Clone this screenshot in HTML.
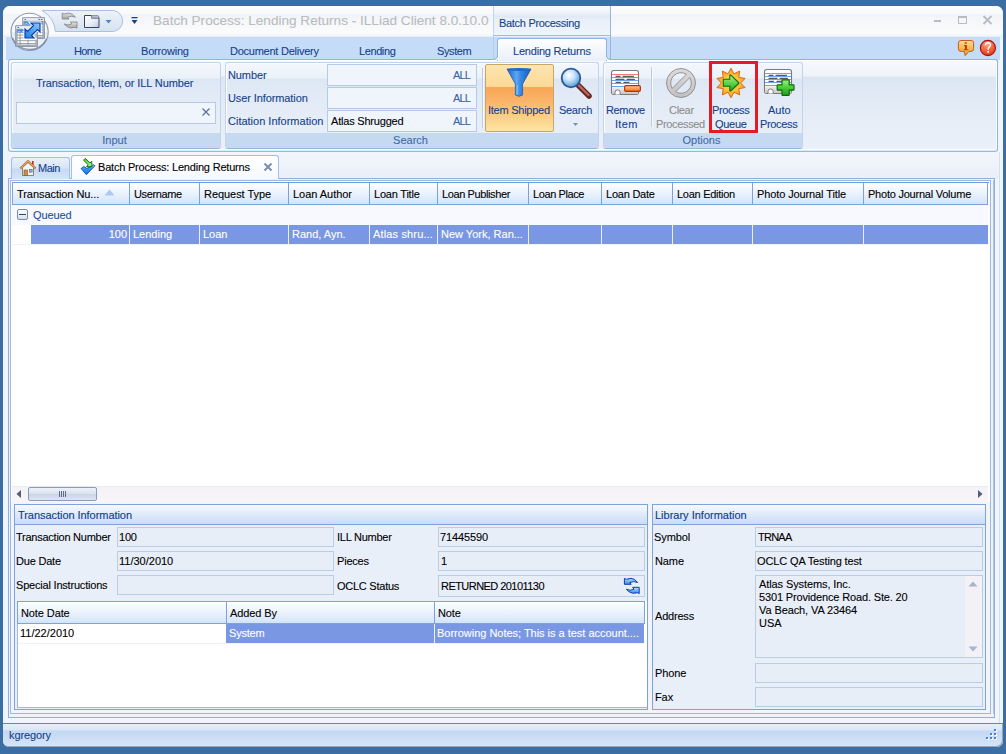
<!DOCTYPE html>
<html><head><meta charset="utf-8">
<style>
*{box-sizing:border-box;margin:0;padding:0}
html,body{width:1006px;height:754px;overflow:hidden;font-family:"Liberation Sans",sans-serif;font-size:11px;color:#000}
body{position:relative;background:#3a6ea5}
.a{position:absolute}
.t{position:absolute;white-space:nowrap;line-height:13px;-webkit-text-stroke:0.1px currentColor}
.bl{color:#15428b}
.grp{position:absolute;border:1px solid #c2d4ec;border-bottom-color:#9db4d6;border-radius:3px;background:linear-gradient(#f4f7fc 0,#ebf1f9 15px,#dde7f4 16px,#e3ebf6 45%,#eaf0f9 100%);box-shadow:inset 1px 1px 0 #fbfdff}
.glbl{position:absolute;left:0;right:0;bottom:0;height:15px;background:#c5d9f0;color:#3e6aaa;text-align:center;line-height:15px;border-radius:0 0 2px 2px;padding-right:3px;-webkit-text-stroke:0.1px currentColor}
.tb{position:absolute;background:#f0f5fc;border:1px solid #b5cae6}
.fld{position:absolute;background:#e8eef8;border:1px solid #b9cde6}
.hdr{position:absolute;background:linear-gradient(#fdfeff,#e6eefa 70%,#d3e0f4);border-bottom:1px solid #7fa5de}
.sep{position:absolute;width:1px;background:#84a9de}
</style></head><body>
<!-- window -->
<div class="a" style="left:3px;top:6px;width:1000px;height:740px;background:#f0f5fb;border-radius:7px 7px 5px 5px"></div>
<!-- title bar -->
<div class="a" style="left:3px;top:6px;width:1000px;height:31px;background:linear-gradient(#fdfdfe 0,#f8f9fb 8px,#eff2f6 9px,#f3f5f9 11px,#fafbfc 27px,#f5f7fa 29px,#e8edf4 31px);border-radius:7px 7px 0 0"></div>
<!-- tab strip -->
<div class="a" style="left:6px;top:37px;width:994px;height:23px;background:#c5dcf8"></div>
<!-- ribbon panel -->
<div class="a" style="left:8px;top:59px;width:990px;height:93px;border:1px solid #8db2e6;border-bottom-color:#a3b5d5;border-radius:3px;background:linear-gradient(#f6f9fd 0,#eff4fa 16px,#dce6f3 17px,#e3ebf6 50%,#ebf1fa 100%);box-shadow:inset 0 -1px 0 #cdf2fb, inset 0 -2px 0 #fbfdff, inset 0 0 0 1px #ffffff"></div>

<!-- title text -->
<div class="t" style="left:153px;top:12px;font-size:13.6px;line-height:17px;color:#b9bcc0">Batch Process: Lending Returns - ILLiad Client 8.0.10.0</div>
<!-- contextual header -->
<div class="a" style="left:493px;top:6px;width:118px;height:30px;border-left:1px solid #c3d4ea;border-right:1px solid #9ab5dc;background:linear-gradient(#f8fafd 0,#eef3fa 7px,#dfe8f4 10px,#e9f0f9 14px,#eff4fb 100%)"></div>
<div class="a" style="left:494px;top:35px;width:116px;height:1px;background:#a5bad6"></div>
<div class="t bl" style="left:499px;top:17px;letter-spacing:-0.3px">Batch Processing</div>
<!-- contextual tab strip region -->
<div class="a" style="left:493px;top:36px;width:118px;height:23px;border-left:1px solid #b5cdeb;border-right:1px solid #9ab5dc"></div>
<!-- active tab -->
<div class="a" style="left:497px;top:38px;width:110px;height:23px;border:1px solid #8db2e3;border-bottom:none;border-radius:3px 3px 0 0;background:linear-gradient(#fdfeff,#f3f7fc 50%,#eaf0f9);box-shadow:inset 1px 1px 0 #ffffff"></div>
<div class="t bl" style="left:513px;top:45px;letter-spacing:-0.2px">Lending Returns</div>
<svg class="a" style="left:606px;top:52px" width="6" height="8" viewBox="0 0 6 8"><path d="M0 0 H0.5 V3 Q0.5 7.5 5 7.5 H6 V8 H0 Z" fill="#e9eff8"/><path d="M0.5 0 V3 Q0.5 7.5 5 7.5 H6" fill="none" stroke="#8db2e3" stroke-width="1"/></svg>
<svg class="a" style="left:492px;top:52px" width="6" height="8" viewBox="0 0 6 8"><path d="M6 0 H5.5 V3 Q5.5 7.5 1 7.5 H0 V8 H6 Z" fill="#e9eff8"/><path d="M5.5 0 V3 Q5.5 7.5 1 7.5 H0" fill="none" stroke="#8db2e3" stroke-width="1"/></svg>

<!-- tabs -->
<div class="t bl" style="left:74px;top:45px;letter-spacing:-0.6px">Home</div>
<div class="t bl" style="left:141px;top:45px;letter-spacing:-0.2px">Borrowing</div>
<div class="t bl" style="left:230px;top:45px;letter-spacing:-0.25px">Document Delivery</div>
<div class="t bl" style="left:359px;top:45px;letter-spacing:-0.4px">Lending</div>
<div class="t bl" style="left:437px;top:45px;letter-spacing:-0.4px">System</div>

<!-- QAT pill -->
<svg class="a" style="left:36px;top:9px" width="90" height="25" viewBox="0 0 90 25">
 <defs><linearGradient id="qg" x1="0" y1="0" x2="0" y2="1"><stop offset="0" stop-color="#eef3fa"/><stop offset="0.5" stop-color="#e2eaf5"/><stop offset="1" stop-color="#d6e2f1"/></linearGradient></defs>
 <path d="M6 1.5 H77.5 A10.6 10.6 0 0 1 77.5 22.5 H19.4 A25 25 0 0 0 6 1.5 Z" fill="url(#qg)" stroke="#a9c0e0" stroke-width="1"/>
</svg>
<!-- refresh icon -->
<svg class="a" style="left:61px;top:12px" width="18" height="18" viewBox="0 0 18 18">
 <defs><linearGradient id="rfg" x1="0" y1="0" x2="0" y2="1"><stop offset="0" stop-color="#e2e2e2"/><stop offset="1" stop-color="#a2a2a2"/></linearGradient></defs>
 <g transform="translate(-1.2,-0.3)">
 <path d="M2.4 1.4 L4.2 2.3 Q9.5 0.2 12.8 2.6 L15.6 5.5 Q11.5 3.6 7.8 5.6 L9.2 7.3 L2.4 7.3 Z" fill="url(#rfg)" stroke="#8a8a8a" stroke-width="0.9" stroke-linejoin="round"/>
 <path d="M17.2 10.3 L17.2 16.6 L15.4 15.7 Q10.2 17.4 6.8 14.6 L4.4 12.3 Q8.4 14.2 12 12.2 L10.6 10.3 Z" fill="url(#rfg)" stroke="#8a8a8a" stroke-width="0.9" stroke-linejoin="round"/>
 </g>
</svg>
<!-- folder icon -->
<svg class="a" style="left:83px;top:14px" width="18" height="15" viewBox="0 0 18 15">
 <defs><linearGradient id="fg" x1="0" y1="0" x2="1" y2="1"><stop offset="0" stop-color="#ffffff"/><stop offset="0.6" stop-color="#e6ebf5"/><stop offset="1" stop-color="#b9c8e2"/></linearGradient></defs>
 <path d="M1.5 1.5 H8.5 V4 H16 V13.5 H1.5 Z" fill="url(#fg)" stroke="#34465f" stroke-width="1"/>
 <path d="M8.5 1.5 H15 L16 3 V4 H8.5 Z" fill="#b8bec8" stroke="#7d8796" stroke-width="0.8"/>
</svg>
<svg class="a" style="left:105px;top:19px" width="7" height="5" viewBox="0 0 7 5"><path d="M0.5 1 H6.5 L3.5 4.5 Z" fill="#5a82c0"/></svg>
<!-- customize qat -->
<svg class="a" style="left:131px;top:17px" width="7" height="8" viewBox="0 0 7 8"><rect x="0.5" y="0" width="6" height="1.3" fill="#15428b"/><path d="M0.5 3 H6.5 L3.5 7 Z" fill="#15428b"/></svg>

<!-- app orb -->
<svg class="a" style="left:9px;top:11px" width="42" height="42" viewBox="0 0 42 42">
 <defs>
  <linearGradient id="og" x1="0" y1="0" x2="0" y2="1"><stop offset="0" stop-color="#ffffff"/><stop offset="0.5" stop-color="#f5f7fa"/><stop offset="0.52" stop-color="#e6ebf1"/><stop offset="1" stop-color="#f3f5f8"/></linearGradient>
  <linearGradient id="ag" x1="0" y1="1" x2="1" y2="0"><stop offset="0" stop-color="#1d7fe0"/><stop offset="1" stop-color="#8cc8fb"/></linearGradient>
 </defs>
 <circle cx="20.6" cy="20.9" r="18.6" fill="url(#og)" stroke="#8d9bb0" stroke-width="1.1"/>
 <path d="M3.5 27 A18.6 18.6 0 0 0 37.5 28" fill="none" stroke="#66768e" stroke-width="1.4" opacity="0.7"/>
 <rect x="13.8" y="6.8" width="21.5" height="20.5" fill="#dfe6f0" stroke="#7b889b" stroke-width="1"/>
 <rect x="14.3" y="7.3" width="20.5" height="2.8" fill="#e8eef7"/>
 <g fill="#5c6470"><rect x="15.5" y="8.1" width="1.6" height="0.9"/><rect x="29.5" y="8.1" width="1.6" height="0.9"/><rect x="31.900000000000002" y="8.1" width="1.6" height="0.9"/></g>
 <rect x="15.0" y="10.3" width="19" height="15.8" fill="#ffffff" stroke="#7f8894" stroke-width="0.9"/>
 <rect x="15.4" y="10.7" width="18.2" height="3" fill="#2f7fd8"/>
 <g fill="#d8ecff"><rect x="16.3" y="11.8" width="2.2" height="0.9"/><rect x="19.8" y="11.8" width="2.2" height="0.9"/></g>
 <g stroke="#8f959c" stroke-width="0.9"><line x1="15.3" y1="16.1" x2="33.8" y2="16.1"/><line x1="15.3" y1="18.9" x2="33.8" y2="18.9"/><line x1="15.3" y1="21.7" x2="33.8" y2="21.7"/><line x1="15.3" y1="24.5" x2="33.8" y2="24.5"/><line x1="18.1" y1="13.7" x2="18.1" y2="25.900000000000002"/><line x1="26.1" y1="18.9" x2="26.1" y2="25.900000000000002"/></g>
 <rect x="6.8" y="14.8" width="21.5" height="20.5" fill="#dfe6f0" stroke="#7b889b" stroke-width="1"/>
 <rect x="7.3" y="15.3" width="20.5" height="2.8" fill="#e8eef7"/>
 <g fill="#5c6470"><rect x="8.5" y="16.1" width="1.6" height="0.9"/><rect x="22.5" y="16.1" width="1.6" height="0.9"/><rect x="24.900000000000002" y="16.1" width="1.6" height="0.9"/></g>
 <rect x="8.0" y="18.3" width="19" height="15.8" fill="#ffffff" stroke="#7f8894" stroke-width="0.9"/>
 <rect x="8.4" y="18.700000000000003" width="18.2" height="3" fill="#2f7fd8"/>
 <g fill="#d8ecff"><rect x="9.3" y="19.8" width="2.2" height="0.9"/><rect x="12.8" y="19.8" width="2.2" height="0.9"/></g>
 <g stroke="#8f959c" stroke-width="0.9"><line x1="8.3" y1="24.1" x2="26.8" y2="24.1"/><line x1="8.3" y1="26.9" x2="26.8" y2="26.9"/><line x1="8.3" y1="29.700000000000003" x2="26.8" y2="29.700000000000003"/><line x1="8.3" y1="32.5" x2="26.8" y2="32.5"/><line x1="11.1" y1="21.700000000000003" x2="11.1" y2="33.900000000000006"/><line x1="19.1" y1="26.9" x2="19.1" y2="33.900000000000006"/></g>
 <path d="M31 12 L31 21 L28.5 18.5 L22.5 24.5 L25 27 L16 27 L16 18 L18.5 20.5 L24.5 14.5 L22 12 Z" fill="none" stroke="#ffffff" stroke-width="3" stroke-linejoin="miter"/>
 <path d="M31 12 L31 21 L28.5 18.5 L22.5 24.5 L25 27 L16 27 L16 18 L18.5 20.5 L24.5 14.5 L22 12 Z" fill="url(#ag)" stroke="#0b3db0" stroke-width="1.2" stroke-linejoin="miter"/>
</svg>

<!-- window buttons -->
<div class="a" style="left:934px;top:20px;width:7px;height:2px;background:#b8bcc2"></div>
<div class="a" style="left:958px;top:16px;width:9px;height:8px;border:1px solid #b8bcc2;border-top-width:2px"></div>
<svg class="a" style="left:982px;top:15px" width="11" height="10" viewBox="0 0 11 10"><path d="M1.5 1 L9.5 9 M9.5 1 L1.5 9" stroke="#b8bcc2" stroke-width="1.8"/></svg>

<!-- info & help icons -->
<svg class="a" style="left:957px;top:39px" width="18" height="18" viewBox="0 0 18 18">
 <defs><linearGradient id="ig" x1="0" y1="0" x2="0" y2="1"><stop offset="0" stop-color="#ffe2a8"/><stop offset="0.3" stop-color="#ffc46a"/><stop offset="1" stop-color="#f89a36"/></linearGradient></defs>
 <path d="M4 1.5 H14 Q16.6 1.5 16.6 4.2 V9.8 Q16.6 12.4 14 12.4 H12 L8.2 16.6 L7.4 12.4 H4 Q1.4 12.4 1.4 9.8 V4.2 Q1.4 1.5 4 1.5 Z" fill="url(#ig)" stroke="#cc5a12" stroke-width="1" stroke-linejoin="round"/>
 <rect x="7.6" y="3.3" width="2.2" height="1.4" fill="#b8400e"/>
 <path d="M7 6 H9.9 V10.2 H11.4 V11.2 H6.8 V10.2 H7.9 V7 H7 Z" fill="#b8400e"/>
</svg>
<svg class="a" style="left:979px;top:39px" width="18" height="18" viewBox="0 0 18 18">
 <defs><radialGradient id="hg" cx="0.45" cy="0.25" r="0.75"><stop offset="0" stop-color="#ffa888"/><stop offset="0.5" stop-color="#f56a48"/><stop offset="1" stop-color="#dc3a1c"/></radialGradient></defs>
 <circle cx="8.9" cy="9" r="7.6" fill="url(#hg)" stroke="#a8100c" stroke-width="1.1"/>
 <path d="M6.4 6.2 Q6.6 3.7 9 3.7 Q11.6 3.8 11.5 6 Q11.4 7.6 9.6 8.6 L9.1 10.8" fill="none" stroke="#fff" stroke-width="1.4"/>
 <rect x="8.3" y="12" width="1.7" height="1.7" fill="#fff"/>
</svg>

<!-- groups -->
<div class="grp" style="left:11px;top:62px;width:210px;height:87px"><div class="glbl">Input</div></div>
<div class="grp" style="left:225px;top:62px;width:374px;height:87px"><div class="glbl">Search</div></div>
<div class="grp" style="left:603px;top:62px;width:200px;height:87px"><div class="glbl">Options</div></div>


<!-- Input group content -->
<div class="t bl" style="left:36px;top:77px;letter-spacing:-0.1px">Transaction, Item, or ILL Number</div>
<div class="tb" style="left:16px;top:102px;width:200px;height:22px"></div>
<svg class="a" style="left:201px;top:107px" width="10" height="10" viewBox="0 0 10 10"><path d="M1.5 1.5 L8.5 8.5 M8.5 1.5 L1.5 8.5" stroke="#5470a4" stroke-width="1.2"/></svg>

<!-- Search group content -->
<div class="t bl" style="left:228px;top:69px;letter-spacing:-0.1px">Number</div>
<div class="t bl" style="left:228px;top:92px;letter-spacing:-0.1px">User Information</div>
<div class="t bl" style="left:228px;top:115px;letter-spacing:0px">Citation Information</div>
<div class="tb" style="left:327px;top:64px;width:150px;height:22px"></div>
<div class="tb" style="left:327px;top:87px;width:150px;height:22px"></div>
<div class="tb" style="left:327px;top:110px;width:150px;height:22px"></div>
<div class="t" style="left:453px;top:69px;color:#3b64a8;letter-spacing:-0.9px">ALL</div>
<div class="t" style="left:453px;top:92px;color:#3b64a8;letter-spacing:-0.9px">ALL</div>
<div class="t" style="left:453px;top:115px;color:#3b64a8;letter-spacing:-0.9px">ALL</div>
<div class="t" style="left:331px;top:115px;letter-spacing:-0.2px">Atlas Shrugged</div>
<div class="a" style="left:482px;top:68px;width:1px;height:60px;background:#b9cde6"></div>
<div class="a" style="left:483px;top:68px;width:1px;height:60px;background:#f6f9fd"></div>
<!-- Item Shipped button -->
<div class="a" style="left:485px;top:64px;width:69px;height:68px;border:1px solid #c9a666;border-radius:2px;background:linear-gradient(#fde6b0 0%,#fcd895 33%,#f9a656 34%,#fab469 55%,#fde6a2 100%)"></div>
<svg class="a" style="left:505px;top:67px" width="28" height="31" viewBox="0 0 28 31">
 <defs><linearGradient id="fun" x1="0" y1="0" x2="1" y2="0"><stop offset="0" stop-color="#1a62c8"/><stop offset="0.4" stop-color="#5aa8f0"/><stop offset="0.55" stop-color="#3a8ae6"/><stop offset="1" stop-color="#1658bd"/></linearGradient></defs>
 <path d="M2 2 H26 L17.6 17 V28 Q14 30.6 10.4 28 V17 Z" fill="url(#fun)" stroke="#1a5ab8" stroke-width="0.8" stroke-linejoin="round"/>
 <ellipse cx="14" cy="2.5" rx="12" ry="1.5" fill="#1f68cc"/>
 <path d="M12.2 18 V27.5" stroke="#8ccaf8" stroke-width="1.2" opacity="0.8"/>
</svg>
<div class="t bl" style="left:488px;top:104px;letter-spacing:-0.25px">Item Shipped</div>
<!-- Search button -->
<svg class="a" style="left:559px;top:66px" width="34" height="34" viewBox="0 0 34 34">
 <defs><radialGradient id="mg" cx="0.4" cy="0.35" r="0.65"><stop offset="0" stop-color="#ffffff"/><stop offset="0.45" stop-color="#c6e2fb"/><stop offset="1" stop-color="#5c9ad6"/></radialGradient></defs>
 <path d="M19.5 19.5 L30 30" stroke="#6a2620" stroke-width="5.5" stroke-linecap="round"/>
 <path d="M20 19.5 L29.5 29" stroke="#b86a5e" stroke-width="2.2" stroke-linecap="round"/>
 <circle cx="12" cy="12" r="9.3" fill="url(#mg)" stroke="#285a98" stroke-width="1.8"/>
</svg>
<div class="t bl" style="left:559px;top:104px;letter-spacing:-0.3px">Search</div>
<svg class="a" style="left:572px;top:122px" width="7" height="5" viewBox="0 0 7 5"><path d="M1 1 H6 L3.5 4 Z" fill="#6d8fc0"/></svg>

<!-- Options group -->
<svg class="a" style="left:610px;top:69px" width="32" height="27" viewBox="0 0 32 27">
 <defs><linearGradient id="og2" x1="0" y1="0" x2="0" y2="1"><stop offset="0" stop-color="#ffd08a"/><stop offset="1" stop-color="#f0701e"/></linearGradient>
 <linearGradient id="dg" x1="0" y1="0" x2="0" y2="1"><stop offset="0" stop-color="#f2f0f0"/><stop offset="1" stop-color="#c8c6c6"/></linearGradient></defs>
 <rect x="1.5" y="1.5" width="27" height="24" rx="2.2" fill="#ffffff" stroke="#7a7a7a" stroke-width="1.1"/>
 <rect x="2.1" y="18" width="25.8" height="7" fill="url(#dg)"/>
 <path d="M5 25.6 V23.5 A2.6 2.6 0 0 1 10.2 23.5 V25.6" fill="#ffffff" stroke="#7a7a7a" stroke-width="1"/>
 <line x1="2" y1="5.5" x2="28" y2="5.5" stroke="#f47a7a" stroke-width="1"/>
 <g stroke="#6fa0ea" stroke-width="1"><line x1="2" y1="8.5" x2="28" y2="8.5"/><line x1="2" y1="11.5" x2="28" y2="11.5"/><line x1="2" y1="14.5" x2="28" y2="14.5"/><line x1="2" y1="17.5" x2="28" y2="17.5"/></g>
 <g stroke="#5a5a5a" stroke-width="1.3" stroke-linecap="round"><line x1="6" y1="7.3" x2="10" y2="7.3"/><line x1="13" y1="7.3" x2="23.5" y2="7.3"/><line x1="6" y1="10.3" x2="14" y2="10.3"/><line x1="17" y1="10.3" x2="24.5" y2="10.3"/><line x1="6" y1="13.3" x2="10.5" y2="13.3"/><line x1="14" y1="13.3" x2="19" y2="13.3"/></g>
 <rect x="14.6" y="16.6" width="15.8" height="5.8" rx="1.3" fill="url(#og2)" stroke="#c42808" stroke-width="1.1"/>
</svg>
<div class="t bl" style="left:606px;top:104px;letter-spacing:-0.35px">Remove</div>
<div class="t bl" style="left:615px;top:118px;letter-spacing:0.3px">Item</div>
<div class="a" style="left:651px;top:67px;width:1px;height:60px;background:#b9cde6"></div>
<div class="a" style="left:652px;top:67px;width:1px;height:60px;background:#f6f9fd"></div>
<svg class="a" style="left:665px;top:67px" width="32" height="32" viewBox="0 0 32 32">
 <defs><linearGradient id="cg" x1="0" y1="0" x2="0" y2="1"><stop offset="0" stop-color="#dcdada"/><stop offset="1" stop-color="#c2c0c0"/></linearGradient></defs>
 <path fill-rule="evenodd" d="M1.5 16 A14.5 14.5 0 1 0 30.5 16 A14.5 14.5 0 1 0 1.5 16 Z M21.39 7.22 A10.3 10.3 0 0 0 7.22 21.39 Z M24.78 10.61 A10.3 10.3 0 0 1 10.61 24.78 Z" fill="url(#cg)" stroke="#8c8a8a" stroke-width="0.9" stroke-linejoin="round"/>
</svg>
<div class="t" style="left:669px;top:104px;color:#8d8d8d;letter-spacing:-0.3px">Clear</div>
<div class="t" style="left:656px;top:118px;color:#8d8d8d;letter-spacing:-0.35px">Processed</div>
<!-- process queue -->
<svg class="a" style="left:714px;top:67px" width="34" height="33" viewBox="0 0 34 33">
 <defs><radialGradient id="sg" cx="0.5" cy="0.5" r="0.5"><stop offset="0" stop-color="#ffe566"/><stop offset="0.55" stop-color="#ffc23a"/><stop offset="1" stop-color="#f59a22"/></radialGradient>
 <linearGradient id="gg" x1="0" y1="0" x2="0" y2="1"><stop offset="0" stop-color="#b4f88a"/><stop offset="0.5" stop-color="#5ed24a"/><stop offset="1" stop-color="#20a820"/></linearGradient></defs>
 <path d="M17.00 1.20 L19.97 6.87 L25.70 4.03 L24.77 10.36 L31.08 11.43 L26.60 16.00 L31.08 20.57 L24.77 21.64 L25.70 27.97 L19.97 25.13 L17.00 30.80 L14.03 25.13 L8.30 27.97 L9.23 21.64 L2.92 20.57 L7.40 16.00 L2.92 11.43 L9.23 10.36 L8.30 4.03 L14.03 6.87 Z" fill="url(#sg)" stroke="#dc6c12" stroke-width="1" stroke-linejoin="miter"/>
 <path d="M9.3 12.3 H15.8 V8.2 Q16.3 7.6 16.9 8.1 L24.6 15.5 Q25.1 16 24.6 16.5 L16.9 23.9 Q16.3 24.4 15.8 23.8 V19.2 H9.3 Z" fill="url(#gg)" stroke="#0b6e0b" stroke-width="1.1" stroke-linejoin="round"/>
</svg>
<div class="t bl" style="left:712px;top:104px;letter-spacing:-0.35px">Process</div>
<div class="t bl" style="left:715px;top:118px;letter-spacing:-0.3px">Queue</div>
<div class="a" style="left:709px;top:61px;width:49px;height:72px;border:3px solid #e31b23"></div>
<!-- auto process -->
<svg class="a" style="left:763px;top:68px" width="33" height="29" viewBox="0 0 33 29">
 <defs><linearGradient id="gp" x1="0" y1="0" x2="0" y2="1"><stop offset="0" stop-color="#9af57a"/><stop offset="0.5" stop-color="#4ccc3a"/><stop offset="1" stop-color="#1f9a1f"/></linearGradient></defs>
 <rect x="1.5" y="1.5" width="27" height="24" rx="2.2" fill="#ffffff" stroke="#7a7a7a" stroke-width="1.1"/>
 <rect x="2.1" y="18" width="25.8" height="7" fill="url(#dg)"/>
 <path d="M5 25.6 V23.5 A2.6 2.6 0 0 1 10.2 23.5 V25.6" fill="#ffffff" stroke="#7a7a7a" stroke-width="1"/>
 <line x1="2" y1="5.5" x2="28" y2="5.5" stroke="#f47a7a" stroke-width="1"/>
 <g stroke="#6fa0ea" stroke-width="1"><line x1="2" y1="8.5" x2="28" y2="8.5"/><line x1="2" y1="11.5" x2="28" y2="11.5"/><line x1="2" y1="14.5" x2="28" y2="14.5"/><line x1="2" y1="17.5" x2="28" y2="17.5"/></g>
 <g stroke="#5a5a5a" stroke-width="1.3" stroke-linecap="round"><line x1="6" y1="7.3" x2="10" y2="7.3"/><line x1="13" y1="7.3" x2="23.5" y2="7.3"/><line x1="6" y1="10.3" x2="14" y2="10.3"/><line x1="17" y1="10.3" x2="24.5" y2="10.3"/><line x1="6" y1="13.3" x2="10.5" y2="13.3"/><line x1="14" y1="13.3" x2="19" y2="13.3"/></g>
 <path d="M19.6 11.8 H25.6 Q26.2 11.8 26.2 12.4 V16.8 H30.4 Q31 16.8 31 17.4 V21.6 Q31 22.2 30.4 22.2 H26.2 V26.8 Q26.2 27.4 25.6 27.4 H19.6 Q19 27.4 19 26.8 V22.2 H14.8 Q14.2 22.2 14.2 21.6 V17.4 Q14.2 16.8 14.8 16.8 H19 V12.4 Q19 11.8 19.6 11.8 Z" fill="url(#gp)" stroke="#0b6a0b" stroke-width="1.2" stroke-linejoin="round"/>
</svg>
<div class="t bl" style="left:768px;top:104px;letter-spacing:0px">Auto</div>
<div class="t bl" style="left:760px;top:118px;letter-spacing:-0.35px">Process</div>

<!-- below ribbon area -->


<!-- doc tab strip -->
<div class="a" style="left:9px;top:152px;width:990px;height:27px;background:linear-gradient(#f3f6fb,#e9eff8)"></div>
<div class="a" style="left:8px;top:178px;width:987px;height:1px;background:#8fb0dc"></div>
<!-- main tab -->
<div class="a" style="left:11px;top:157px;width:59px;height:22px;border:1px solid #a4bfe3;border-bottom:none;border-radius:3px 3px 0 0;background:linear-gradient(#e9f0fa,#d9e6f6 45%,#c6daf3 55%,#d7e5f6)"></div>
<svg class="a" style="left:19px;top:159px" width="18" height="18" viewBox="0 0 18 18">
 <rect x="13" y="2" width="1.6" height="4" fill="#d42020"/>
 <path d="M3.5 8.5 V16.5 H14.5 V8.5 L9 3.5 Z" fill="#f2f2f2" stroke="#777" stroke-width="0.9"/>
 <path d="M1.2 9.5 L9 2 L16.8 9.5" fill="none" stroke="#b8742e" stroke-width="2" stroke-linejoin="round"/>
 <path d="M1.2 9.5 L9 2 L16.8 9.5" fill="none" stroke="#f0c080" stroke-width="0.8"/>
 <rect x="5" y="11" width="3.4" height="5.5" fill="#d08a3a" stroke="#8a5520" stroke-width="0.6"/>
 <rect x="10.5" y="10.5" width="2.6" height="2.6" fill="#8cc0f0" stroke="#555" stroke-width="0.6"/>
</svg>
<div class="t bl" style="left:38px;top:162px;letter-spacing:-0.5px">Main</div>
<!-- batch tab -->
<div class="a" style="left:71px;top:155px;width:208px;height:24px;border:1px solid #a4bfe3;border-bottom:none;border-radius:3px 3px 0 0;background:linear-gradient(#ffffff,#f6f9fd)"></div>
<div class="a" style="left:72px;top:178px;width:206px;height:1px;background:#f6f9fd"></div>
<svg class="a" style="left:80px;top:158px" width="17" height="18" viewBox="0 0 17 18">
 <defs><linearGradient id="bt" x1="0" y1="0" x2="0" y2="1"><stop offset="0" stop-color="#8ccaf8"/><stop offset="0.35" stop-color="#3e9df0"/><stop offset="1" stop-color="#1a6ad6"/></linearGradient>
 <linearGradient id="gt" x1="0" y1="0" x2="1" y2="1"><stop offset="0" stop-color="#3fc43f"/><stop offset="1" stop-color="#b6fb86"/></linearGradient></defs>
 <path d="M1.1 10.6 L3.8 8.4 L6.5 10.3 Q10.5 10 13.4 6.6 L14.9 7.8 L6.4 16.7 Z" fill="url(#bt)" stroke="#0b4ecb" stroke-width="0.9" stroke-linejoin="round"/>
 <path d="M5.3 0.4 L10 5 L11.8 3.2 L11.8 8.6 L6.4 8.6 L8.2 6.8 L3.5 2.2 Z" fill="url(#gt)" stroke="#0e6a10" stroke-width="0.9" stroke-linejoin="miter"/>
</svg>
<div class="t" style="left:98px;top:161px;letter-spacing:-0.2px">Batch Process: Lending Returns</div>
<svg class="a" style="left:263px;top:162px" width="10" height="10" viewBox="0 0 10 10"><path d="M1.5 1.5 L8.5 8.5 M8.5 1.5 L1.5 8.5" stroke="#7e8ea6" stroke-width="2"/></svg>

<!-- grid frames -->
<div class="a" style="left:8px;top:179px;width:987px;height:539px;border-left:1px solid #8fb0dc;border-right:1px solid #8fb0dc;background:#eef3fa"></div>
<div class="a" style="left:10px;top:180px;width:981px;height:324px;border:1px solid #9fb9de;border-bottom:none;background:#fff"></div>
<div class="a" style="left:993px;top:180px;width:1px;height:534px;background:#a9c1e2"></div>
<div class="a" style="left:999px;top:152px;width:1px;height:571px;background:#d5e0ee"></div>
<div class="a" style="left:12px;top:182px;width:977px;height:1px;background:#6f9be0"></div>
<!-- grid header -->
<div class="a" style="left:12px;top:182px;width:976px;height:23px;background:linear-gradient(#fdfeff,#eff5fd 40%,#d3e4fa);border:1px solid #7ea3db;border-top-color:#6f9be0"></div>
<div class="a" style="left:129px;top:183px;width:1px;height:21px;background:#7aa2de"></div>
<div class="a" style="left:199px;top:183px;width:1px;height:21px;background:#7aa2de"></div>
<div class="a" style="left:288px;top:183px;width:1px;height:21px;background:#7aa2de"></div>
<div class="a" style="left:369px;top:183px;width:1px;height:21px;background:#7aa2de"></div>
<div class="a" style="left:437px;top:183px;width:1px;height:21px;background:#7aa2de"></div>
<div class="a" style="left:528px;top:183px;width:1px;height:21px;background:#7aa2de"></div>
<div class="a" style="left:601px;top:183px;width:1px;height:21px;background:#7aa2de"></div>
<div class="a" style="left:672px;top:183px;width:1px;height:21px;background:#7aa2de"></div>
<div class="a" style="left:752px;top:183px;width:1px;height:21px;background:#7aa2de"></div>
<div class="a" style="left:863px;top:183px;width:1px;height:21px;background:#7aa2de"></div>
<div class="t" style="left:17px;top:188px;letter-spacing:-0.06px">Transaction Nu...</div>
<div class="t" style="left:134px;top:188px;letter-spacing:-0.38px">Username</div>
<div class="t" style="left:204px;top:188px;letter-spacing:-0.05px">Request Type</div>
<div class="t" style="left:293px;top:188px;letter-spacing:-0.03px">Loan Author</div>
<div class="t" style="left:374px;top:188px;letter-spacing:-0.21px">Loan Title</div>
<div class="t" style="left:442px;top:188px;letter-spacing:-0.39px">Loan Publisher</div>
<div class="t" style="left:533px;top:188px;letter-spacing:-0.40px">Loan Place</div>
<div class="t" style="left:606px;top:188px;letter-spacing:-0.23px">Loan Date</div>
<div class="t" style="left:677px;top:188px;letter-spacing:-0.27px">Loan Edition</div>
<div class="t" style="left:757px;top:188px;letter-spacing:-0.11px">Photo Journal Title</div>
<div class="t" style="left:868px;top:188px;letter-spacing:-0.23px">Photo Journal Volume</div>
<svg class="a" style="left:104px;top:189px" width="11" height="7" viewBox="0 0 11 7"><path d="M0.5 6.5 L5.5 0.5 L10.5 6.5 Z" fill="#a9c9f2"/></svg>
<!-- queued row -->
<div class="a" style="left:12px;top:205px;width:976px;height:20px;background:#f7f9fe"></div>
<div class="a" style="left:17px;top:209px;width:11px;height:11px;border:1px solid #7b8aa6;border-radius:2px;background:linear-gradient(#ffffff,#d7dfec)"></div>
<div class="a" style="left:19px;top:214px;width:7px;height:1px;background:#35476b"></div>
<div class="t" style="left:33px;top:209px;color:#1f4f9f;letter-spacing:-0.1px">Queued</div>
<!-- selected row -->
<div class="a" style="left:31px;top:225px;width:957px;height:19px;background:#7a97e4"></div>
<div class="a" style="left:12px;top:244px;width:976px;height:1px;background:#eef2fa"></div>
<div class="a" style="left:129px;top:225px;width:1px;height:19px;background:#eaf0fd"></div>
<div class="a" style="left:199px;top:225px;width:1px;height:19px;background:#eaf0fd"></div>
<div class="a" style="left:288px;top:225px;width:1px;height:19px;background:#eaf0fd"></div>
<div class="a" style="left:369px;top:225px;width:1px;height:19px;background:#eaf0fd"></div>
<div class="a" style="left:437px;top:225px;width:1px;height:19px;background:#eaf0fd"></div>
<div class="a" style="left:528px;top:225px;width:1px;height:19px;background:#eaf0fd"></div>
<div class="a" style="left:601px;top:225px;width:1px;height:19px;background:#eaf0fd"></div>
<div class="a" style="left:672px;top:225px;width:1px;height:19px;background:#eaf0fd"></div>
<div class="a" style="left:752px;top:225px;width:1px;height:19px;background:#eaf0fd"></div>
<div class="a" style="left:863px;top:225px;width:1px;height:19px;background:#eaf0fd"></div>
<div class="t" style="left:60px;top:228px;width:67px;text-align:right;color:#fff">100</div>
<div class="t" style="left:133px;top:228px;color:#fff;letter-spacing:0px">Lending</div>
<div class="t" style="left:203px;top:228px;color:#fff;letter-spacing:0px">Loan</div>
<div class="t" style="left:292px;top:228px;color:#fff;letter-spacing:0px">Rand, Ayn.</div>
<div class="t" style="left:373px;top:228px;color:#fff;letter-spacing:0.15px">Atlas shru...</div>
<div class="t" style="left:441px;top:228px;color:#fff;letter-spacing:0px">New York, Ran...</div>

<!-- h scrollbar -->
<div class="a" style="left:12px;top:486px;width:976px;height:16px;background:linear-gradient(#f4f2f6,#f7f5f8);border-top:1px solid #ece9ef"></div>
<svg class="a" style="left:15px;top:489px" width="8" height="10" viewBox="0 0 8 10"><path d="M6 1 L1.5 5 L6 9 Z" fill="#4e5e7a"/></svg>
<svg class="a" style="left:976px;top:489px" width="8" height="10" viewBox="0 0 8 10"><path d="M2 1 L6.5 5 L2 9 Z" fill="#4e5e7a"/></svg>
<div class="a" style="left:28px;top:487px;width:69px;height:14px;border:1px solid #8a9cba;border-radius:2px;background:linear-gradient(#eef2f8,#d9e1ee 50%,#c9d4e6 51%,#dfe6f2)"></div>
<div class="a" style="left:59px;top:491px;width:7px;height:6px;background:repeating-linear-gradient(90deg,#5b6d8c 0 1px,transparent 1px 2px)"></div>


<!-- lower frames -->
<div class="a" style="left:10px;top:502px;width:981px;height:212px;border-left:1px solid #9fb9de;border-right:1px solid #9fb9de;border-bottom:1px solid #9fb9de;background:#f1f5fb"></div>
<div class="a" style="left:8px;top:717px;width:987px;height:1px;background:#8fb0dc"></div>
<!-- Transaction Information panel -->
<div class="a" style="left:14px;top:504px;width:634px;height:206px;border:1px solid #7ea3db;background:#e8eff9"></div>
<div class="a" style="left:15px;top:505px;width:632px;height:20px;background:linear-gradient(#f6f9fe,#e3edfa 40%,#c9dcf6);border-bottom:1px solid #7ea3db"></div>
<div class="t" style="left:18px;top:509px;color:#0f3a88;letter-spacing:-0.05px">Transaction Information</div>
<div class="t" style="left:16px;top:531px;letter-spacing:-0.25px">Transaction Number</div>
<div class="t" style="left:16px;top:555px;letter-spacing:-0.2px">Due Date</div>
<div class="t" style="left:16px;top:579px;letter-spacing:-0.2px">Special Instructions</div>
<div class="fld" style="left:117px;top:527px;width:217px;height:20px"></div>
<div class="fld" style="left:117px;top:551px;width:217px;height:20px"></div>
<div class="fld" style="left:117px;top:575px;width:217px;height:20px"></div>
<div class="t" style="left:119px;top:531px;letter-spacing:-0.2px">100</div>
<div class="t" style="left:119px;top:555px;letter-spacing:0px">11/30/2010</div>
<div class="t" style="left:337px;top:531px;letter-spacing:-0.25px">ILL Number</div>
<div class="t" style="left:337px;top:555px;letter-spacing:-0.2px">Pieces</div>
<div class="t" style="left:337px;top:580px;letter-spacing:-0.25px">OCLC Status</div>
<div class="fld" style="left:438px;top:527px;width:207px;height:20px"></div>
<div class="fld" style="left:438px;top:551px;width:207px;height:20px"></div>
<div class="fld" style="left:438px;top:575px;width:207px;height:22px"></div>
<div class="t" style="left:440px;top:531px;letter-spacing:-0.1px">71445590</div>
<div class="t" style="left:441px;top:555px">1</div>
<div class="t" style="left:441px;top:580px;letter-spacing:-0.55px">RETURNED 20101130</div>
<svg class="a" style="left:622px;top:577px" width="19" height="18" viewBox="0 0 19 18">
 <defs><linearGradient id="rg" x1="0" y1="0" x2="0" y2="1"><stop offset="0" stop-color="#b8e0fc"/><stop offset="1" stop-color="#3a86e2"/></linearGradient></defs>
 <path d="M2.4 1.4 L4.2 2.3 Q9.5 0.2 12.8 2.6 L15.6 5.5 Q11.5 3.6 7.8 5.6 L9.2 7.3 L2.4 7.3 Z" fill="url(#rg)" stroke="#0b3db5" stroke-width="1" stroke-linejoin="round"/>
 <path d="M17.2 10.3 L17.2 16.6 L15.4 15.7 Q10.2 17.4 6.8 14.6 L4.4 12.3 Q8.4 14.2 12 12.2 L10.6 10.3 Z" fill="url(#rg)" stroke="#0b3db5" stroke-width="1" stroke-linejoin="round"/>
</svg>
<!-- note grid -->
<div class="a" style="left:17px;top:601px;width:630px;height:107px;border-left:1px solid #9fbae0;border-bottom:1px solid #9fbae0;background:#fff"></div>
<div class="a" style="left:17px;top:601px;width:628px;height:23px;background:linear-gradient(#fdfeff,#eff5fd 40%,#d3e4fa);border:1px solid #7ea3db"></div>
<div class="a" style="left:226px;top:602px;width:1px;height:21px;background:#7aa2de"></div>
<div class="a" style="left:434px;top:602px;width:1px;height:21px;background:#7aa2de"></div>
<div class="t" style="left:21px;top:607px;letter-spacing:-0.1px">Note Date</div>
<div class="t" style="left:230px;top:607px;letter-spacing:-0.1px">Added By</div>
<div class="t" style="left:438px;top:607px;letter-spacing:-0.1px">Note</div>
<div class="a" style="left:226px;top:624px;width:418px;height:19px;background:#7a97e4"></div>
<div class="a" style="left:434px;top:624px;width:1px;height:19px;background:#eaf0fd"></div>
<div class="a" style="left:18px;top:643px;width:626px;height:1px;background:#eef2fa"></div>
<div class="t" style="left:20px;top:627px;letter-spacing:0px">11/22/2010</div>
<div class="t" style="left:229px;top:627px;color:#fff;letter-spacing:-0.2px">System</div>
<div class="t" style="left:437px;top:627px;color:#fff;letter-spacing:-0.02px">Borrowing Notes; This is a test account....</div>

<!-- Library Information panel -->
<div class="a" style="left:652px;top:504px;width:334px;height:206px;border:1px solid #7ea3db;background:#e8eff9"></div>
<div class="a" style="left:653px;top:505px;width:332px;height:20px;background:linear-gradient(#f6f9fe,#e3edfa 40%,#c9dcf6);border-bottom:1px solid #7ea3db"></div>
<div class="t" style="left:655px;top:509px;color:#0f3a88">Library Information</div>
<div class="t" style="left:654px;top:531px;letter-spacing:-0.1px">Symbol</div>
<div class="t" style="left:655px;top:555px;letter-spacing:-0.1px">Name</div>
<div class="t" style="left:655px;top:610px;letter-spacing:-0.2px">Address</div>
<div class="t" style="left:655px;top:667px;letter-spacing:-0.1px">Phone</div>
<div class="t" style="left:655px;top:691px;letter-spacing:-0.1px">Fax</div>
<div class="fld" style="left:755px;top:527px;width:228px;height:20px"></div>
<div class="fld" style="left:755px;top:551px;width:228px;height:20px"></div>
<div class="fld" style="left:755px;top:575px;width:228px;height:83px"></div>
<div class="fld" style="left:755px;top:663px;width:228px;height:20px"></div>
<div class="fld" style="left:755px;top:687px;width:228px;height:20px"></div>
<div class="t" style="left:758px;top:531px;letter-spacing:-0.75px">TRNAA</div>
<div class="t" style="left:757px;top:555px;letter-spacing:-0.13px">OCLC QA Testing test</div>
<div class="t" style="left:759px;top:578px;letter-spacing:-0.1px">Atlas Systems, Inc.</div>
<div class="t" style="left:759px;top:591px;letter-spacing:-0.15px">5301 Providence Road. Ste. 20</div>
<div class="t" style="left:759px;top:604px;letter-spacing:-0.1px">Va Beach, VA 23464</div>
<div class="t" style="left:759px;top:617px;letter-spacing:0px">USA</div>
<div class="a" style="left:965px;top:576px;width:17px;height:81px;background:#f3f1f5"></div>
<svg class="a" style="left:967px;top:580px" width="12" height="8" viewBox="0 0 12 8"><path d="M1.5 6.5 L6 1.5 L10.5 6.5 Z" fill="#a6b4d0"/></svg>
<svg class="a" style="left:967px;top:645px" width="12" height="8" viewBox="0 0 12 8"><path d="M1.5 1.5 L6 6.5 L10.5 1.5 Z" fill="#a6b4d0"/></svg>

<!-- status bar -->
<div class="a" style="left:3px;top:723px;width:1000px;height:24px;border-top:1px solid #6486bb;border-radius:0 0 6px 6px;background:linear-gradient(#e6effa 0,#d8e6f8 6px,#c3d8f3 7px,#cadcf4 12px,#d6e5f8 100%);box-shadow:inset -1px -1px 0 #9ea6b6"></div>
<div class="t" style="left:9px;top:729px;color:#15428b;letter-spacing:-0.1px">kgregory</div>
<svg class="a" style="left:985px;top:728px" width="13" height="13" viewBox="0 0 13 13">
 <g fill="#ffffff"><rect x="10" y="2" width="2" height="2"/><rect x="6" y="6" width="2" height="2"/><rect x="10" y="6" width="2" height="2"/><rect x="2" y="10" width="2" height="2"/><rect x="6" y="10" width="2" height="2"/><rect x="10" y="10" width="2" height="2"/></g>
 <g fill="#4f7fcc"><rect x="9" y="1" width="2" height="2"/><rect x="5" y="5" width="2" height="2"/><rect x="9" y="5" width="2" height="2"/><rect x="1" y="9" width="2" height="2"/><rect x="5" y="9" width="2" height="2"/><rect x="9" y="9" width="2" height="2"/></g>
</svg>
</body></html>
